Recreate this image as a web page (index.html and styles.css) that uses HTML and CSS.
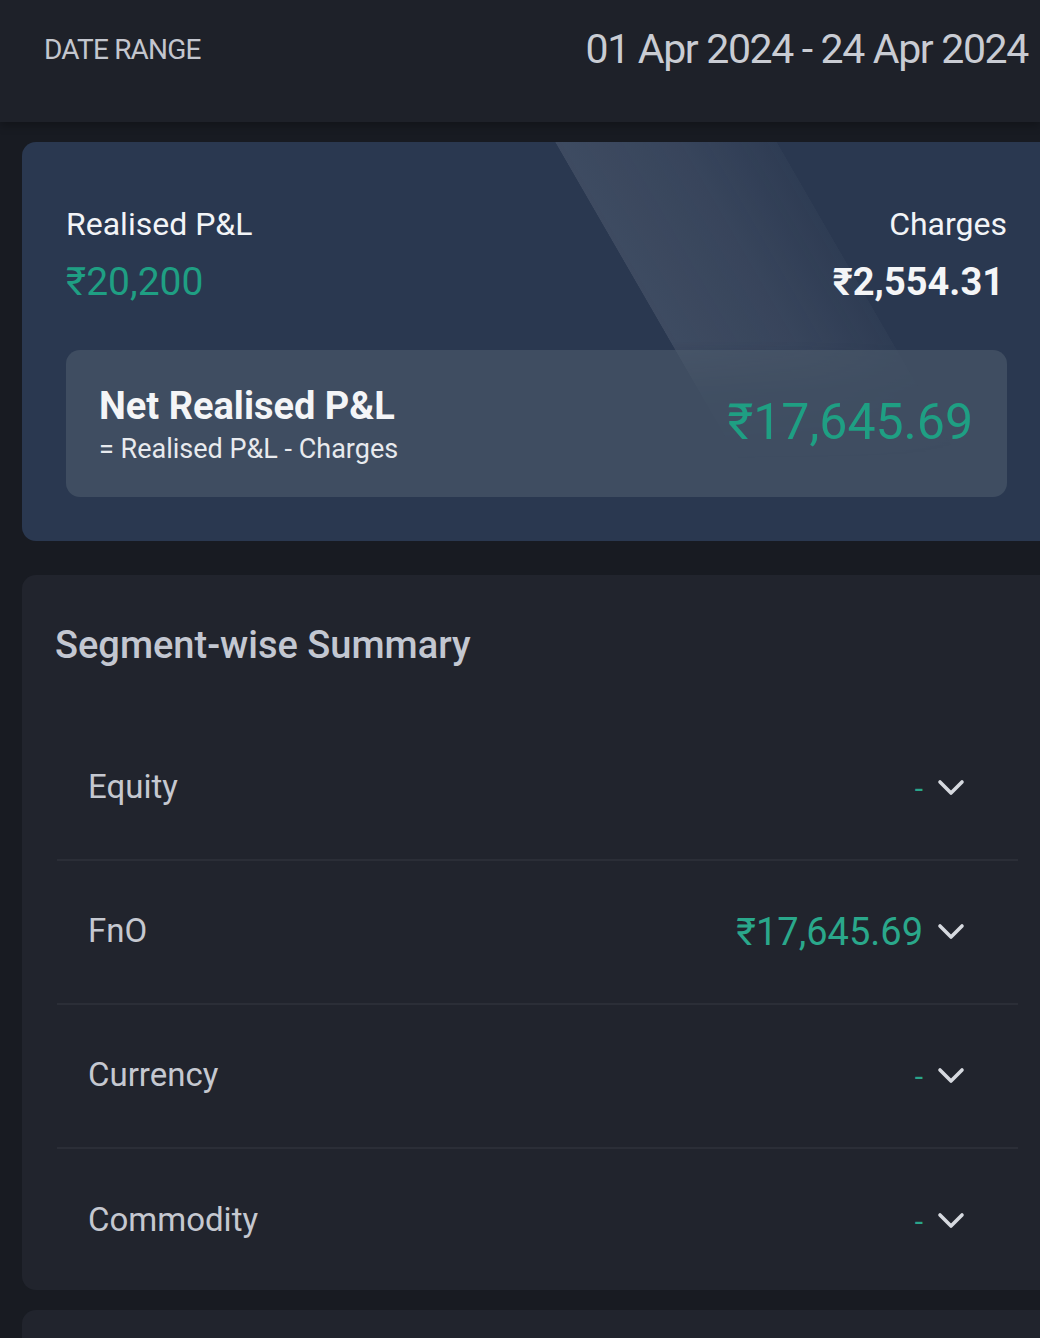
FILE: index.html
```html
<!DOCTYPE html>
<html>
<head>
<meta charset="utf-8">
<link rel="stylesheet" href="styles.css">
</head>
<body>
<div class="page">
  <header class="header">
    <span class="hdr-label">DATE RANGE</span>
    <span class="hdr-date">01 Apr 2024 - 24 Apr 2024</span>
  </header>

  <section class="pl-card">
    <div class="stripe"></div>
    <div class="pl-top">
      <div class="pl-col">
        <div class="pl-label">Realised P&amp;L</div>
        <div class="pl-value green">₹20,200</div>
      </div>
      <div class="pl-col right">
        <div class="pl-label">Charges</div>
        <div class="pl-value bold">₹2,554.31</div>
      </div>
    </div>
    <div class="net-box">
      <div class="net-left">
        <div class="net-title">Net Realised P&amp;L</div>
        <div class="net-sub">= Realised P&amp;L - Charges</div>
      </div>
      <div class="net-value green">₹17,645.69</div>
    </div>
  </section>

  <section class="summary">
    <h2 class="sum-title">Segment-wise Summary</h2>
    <div class="row">
      <span class="row-label">Equity</span>
      <span class="row-right"><span class="dash">-</span><svg class="chev" viewBox="0 0 28 18"><path d="M3 3 L14 14 L25 3" fill="none" stroke="#d6d9df" stroke-width="3.6" stroke-linecap="round" stroke-linejoin="round"/></svg></span>
    </div>
    <div class="row">
      <span class="row-label">FnO</span>
      <span class="row-right"><span class="amt">₹17,645.69</span><svg class="chev" viewBox="0 0 28 18"><path d="M3 3 L14 14 L25 3" fill="none" stroke="#d6d9df" stroke-width="3.6" stroke-linecap="round" stroke-linejoin="round"/></svg></span>
    </div>
    <div class="row">
      <span class="row-label">Currency</span>
      <span class="row-right"><span class="dash">-</span><svg class="chev" viewBox="0 0 28 18"><path d="M3 3 L14 14 L25 3" fill="none" stroke="#d6d9df" stroke-width="3.6" stroke-linecap="round" stroke-linejoin="round"/></svg></span>
    </div>
    <div class="row last">
      <span class="row-label">Commodity</span>
      <span class="row-right"><span class="dash">-</span><svg class="chev" viewBox="0 0 28 18"><path d="M3 3 L14 14 L25 3" fill="none" stroke="#d6d9df" stroke-width="3.6" stroke-linecap="round" stroke-linejoin="round"/></svg></span>
    </div>
  </section>

  <section class="next-card"></section>
</div>
</body>
</html>
```

FILE: styles.css
```css
html, body {
  margin: 0;
  padding: 0;
  background: #181b22;
  overflow: hidden;
}
body {
  font-family: Roboto, "Noto Sans", "Liberation Sans", sans-serif;
  width: 1040px;
  height: 1338px;
}
.page {
  display: flex;
  flex-direction: column;
}
.header {
  height: 122px;
  background: #1e2129;
  display: flex;
  justify-content: space-between;
  align-items: center;
  padding: 0 12px 24px 44px;
  box-sizing: border-box;
  box-shadow: 0 4px 8px rgba(0,0,0,0.25);
}
.hdr-label {
  font-size: 28px;
  color: #c3c6ce;
  letter-spacing: -0.8px;
}
.hdr-date {
  font-size: 41px;
  color: #c9ccd3;
  letter-spacing: -1.35px;
}
.pl-card {
  position: relative;
  margin: 20px -24px 0 22px;
  height: 399px;
  border-radius: 14px;
  background: #2a3850;
  overflow: hidden;
  padding: 62px 57px 0 44px;
  box-sizing: border-box;
}
.stripe {
  position: absolute;
  left: 533px;
  top: 0;
  width: 222px;
  height: 320px;
  background: linear-gradient(90deg, rgba(200,205,215,0.13), rgba(200,205,215,0.09) 55%, rgba(200,205,215,0.03));
  -webkit-mask-image: linear-gradient(180deg, #000 0%, #000 62%, rgba(0,0,0,0.25) 78%, transparent 100%);
  mask-image: linear-gradient(180deg, #000 0%, #000 62%, rgba(0,0,0,0.25) 78%, transparent 100%);
  transform: skewX(30deg);
  transform-origin: top left;
}
.pl-top {
  position: relative;
  display: flex;
  justify-content: space-between;
}
.pl-col {
  display: flex;
  flex-direction: column;
  gap: 14px;
}
.pl-col.right {
  align-items: flex-end;
}
.pl-label {
  font-size: 32px;
  color: #f2f4f7;
  line-height: 40px;
}
.pl-value {
  font-size: 39px;
  line-height: 48px;
  color: #f4f5f7;
}
.pl-value.bold {
  font-size: 38px;
  font-weight: 700;
  margin-right: 3px;
}
.green {
  color: #1f9f83;
}
.net-box {
  position: relative;
  margin-top: 44px;
  height: 147px;
  border-radius: 14px;
  background: rgba(80, 94, 112, 0.55);
  display: flex;
  justify-content: space-between;
  align-items: center;
  padding: 0 34px 0 33px;
  box-sizing: border-box;
}
.net-left {
  display: flex;
  flex-direction: column;
  gap: 0;
  margin-top: 4px;
}
.net-title {
  font-size: 38px;
  font-weight: 700;
  color: #f4f5f7;
  line-height: 46px;
}
.net-sub {
  font-size: 27px;
  color: #e8eaee;
  line-height: 40px;
}
.net-value {
  font-size: 50px;
  line-height: 60px;
  margin-top: -4px;
}
.summary {
  margin: 34px -24px 0 22px;
  height: 715px;
  border-radius: 14px;
  background: #21242d;
  padding: 46px 46px 0 33px;
  box-sizing: border-box;
}
.sum-title {
  margin: 0 0 48px 0;
  font-size: 38px;
  font-weight: 500;
  color: #c3c7d1;
  line-height: 48px;
}
.row {
  display: flex;
  justify-content: space-between;
  align-items: center;
  height: 144px;
  margin-left: 2px;
  padding: 0 53px 0 31px;
  border-bottom: 2px solid #2b2e37;
  box-sizing: border-box;
}
.row.last {
  border-bottom: none;
}
.row-label {
  font-size: 33px;
  color: #c5c8d0;
  margin-top: -3px;
}
.row-right {
  display: flex;
  align-items: center;
  gap: 14px;
}
.dash {
  font-size: 30px;
  color: #2aa58a;
}
.amt {
  font-size: 38px;
  color: #2aa88b;
}
.chev {
  width: 28px;
  height: 18px;
  display: block;
}
.next-card {
  margin: 20px -24px 0 22px;
  height: 60px;
  border-radius: 14px;
  background: #21242d;
}
```
